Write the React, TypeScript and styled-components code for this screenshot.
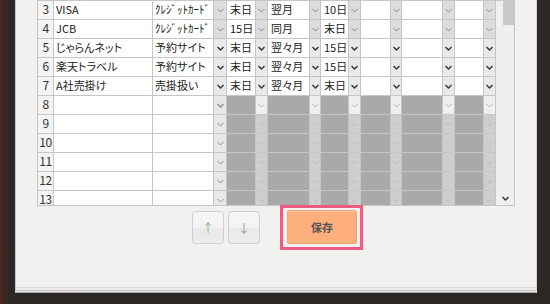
import React from "react";
import styled, { createGlobalStyle } from "styled-components";

const Global = createGlobalStyle`
  html, body { margin: 0; padding: 0; }
  body {
    background: #2b2725;
    font-family: "Noto Sans CJK JP", "Noto Sans", sans-serif;
    color: #222;
  }
`;

const Frame = styled.div`
  box-sizing: border-box;
  width: 550px;
  height: 304px;
  display: flex;
  padding: 0 13px 11px 15px;
  background:
    linear-gradient(to right, #4a2a21 0, #3b2620 4px, #2d2826 9px, #2b2725 100%);
  overflow: hidden;
`;

const Paper = styled.div`
  flex: 1;
  box-sizing: border-box;
  padding-left: 22px;
  box-shadow: inset 1px 0 0 #c9c9c9, inset -1px 0 0 #d8d8d8;
  background: linear-gradient(
    to bottom,
    #f2f1ef 0 287px,
    #dadada 287px 288px,
    #ebebeb 288px 290px,
    #cbcbcb 290px 291px,
    #e4e4e4 291px 292px,
    #a9a9a9 292px
  );
`;

const ScrollBox = styled.div`
  box-sizing: border-box;
  width: 478px;
  height: 206px;
  border: 1px solid #c6c6c6;
  display: flex;
  overflow: hidden;
  background: #fff;
`;

const Body = styled.div`
  width: 457px;
  display: flex;
  flex-direction: column;
  gap: 1px;
  background: #c6c6c6;
`;

const Row = styled.div`
  display: grid;
  grid-template-columns: 15px 98px 60px 12px 28px 11px 41px 10px 27px 11px 29px 10px 40px 11px 28px 11px;
  column-gap: 1px;
  height: 18px;
  flex: none;
`;

const NumCell = styled.div`
  background: #f4f4f4;
  font-size: 12px;
  line-height: 16px;
  text-align: center;
  color: #333;
  letter-spacing: -0.5px;
`;

const TextCell = styled.div<{ $gray?: boolean; $small?: boolean }>`
  background: ${(p) => (p.$gray ? "#a9a9a9" : "#fff")};
  font-size: 11px;
  line-height: 17px;
  padding-left: ${(p) => (p.$small ? "2px" : "3px")};
  white-space: nowrap;
  overflow: hidden;
  font-feature-settings: "palt";
  color: #222;
`;

type ArrowTone = "muted" | "active" | "empty" | "firstOff" | "off";

const arrowBg: Record<ArrowTone, string> = {
  muted: "#dcdcdc",
  active: "#e9e9e9",
  empty: "#e8e8e8",
  firstOff: "#efefef",
  off: "#cecece",
};
const arrowFg: Record<ArrowTone, string> = {
  muted: "#8a8a8a",
  active: "#333",
  empty: "#8f8f8f",
  firstOff: "#b5b5b5",
  off: "#b9b9b9",
};

const ArrowCell = styled.div<{ $tone: ArrowTone }>`
  background: ${(p) => arrowBg[p.$tone]};
  color: ${(p) => arrowFg[p.$tone]};
  display: flex;
  align-items: center;
  justify-content: center;
`;

const Chevron = ({ bold }: { bold?: boolean }) => (
  <svg width="7" height="5" viewBox="0 0 7 5">
    <polyline
      points="0.5,1 3.5,4 6.5,1"
      fill="none"
      stroke="currentColor"
      strokeWidth={bold ? 1.4 : 1}
    />
  </svg>
);

const ScrollBar = styled.div`
  width: 18px;
  border-left: 1px solid #c6c6c6;
  background: #efefef;
  display: flex;
  flex-direction: column;
  justify-content: space-between;
  align-items: flex-end;
`;

const Thumb = styled.div`
  width: 11px;
  height: 24px;
  background: #c9c9c9;
`;

const ScrollDown = styled.div`
  width: 18px;
  height: 9px;
  display: flex;
  justify-content: center;
  align-items: flex-start;
  color: #333;
`;

const Actions = styled.div`
  display: flex;
  align-items: flex-start;
  margin-left: 155px;
  margin-top: -1px;
`;

const MoveButton = styled.button`
  box-sizing: border-box;
  width: 32px;
  height: 33px;
  margin-top: 6px;
  margin-right: 4px;
  padding: 0;
  border: 1px solid #d0d0d0;
  border-radius: 3px;
  background: linear-gradient(to bottom, #f6f6f6 0, #f2f2f2 50%, #e9e9e9 52%, #ececec 100%);
  color: #9a9a9a;
  font-family: "Noto Sans CJK JP", sans-serif;
  font-size: 12px;
  line-height: 1;
`;

const Highlight = styled.div`
  margin-left: 16px;
  border: 3px solid #ef5a82;
  padding: 2px 3px 3px 4px;
`;

const SaveButton = styled.button`
  box-sizing: border-box;
  width: 70px;
  height: 34px;
  padding: 0;
  border: 1px solid #e7a678;
  border-radius: 2px;
  background: #ffb07c;
  color: #555;
  font-family: "Noto Sans CJK JP", sans-serif;
  font-weight: 700;
  font-size: 11px;
  box-shadow: inset 0 1px 0 #ffc59c;
`;

type Data = { n: number; name?: string; type?: string; a?: string; b?: string; c?: string; muted?: boolean };

const rows: Data[] = [
  { n: 3, name: "VISA", type: "ｸﾚｼﾞｯﾄｶｰﾄﾞ", a: "末日", b: "翌月", c: "10日", muted: true },
  { n: 4, name: "JCB", type: "ｸﾚｼﾞｯﾄｶｰﾄﾞ", a: "15日", b: "同月", c: "末日", muted: true },
  { n: 5, name: "じゃらんネット", type: "予約サイト", a: "末日", b: "翌々月", c: "15日" },
  { n: 6, name: "楽天トラベル", type: "予約サイト", a: "末日", b: "翌々月", c: "15日" },
  { n: 7, name: "A社売掛け", type: "売掛扱い", a: "末日", b: "翌々月", c: "末日" },
  { n: 8 },
  { n: 9 },
  { n: 10 },
  { n: 11 },
  { n: 12 },
  { n: 13 },
];

const DataRow = ({ r }: { r: Data }) => {
  const filled = !!r.name;
  const tone: ArrowTone = filled ? (r.muted ? "muted" : "active") : r.n === 8 ? "firstOff" : "off";
  const typeTone: ArrowTone = filled ? tone : "empty";
  const bold = filled && !r.muted;
  const rest = [r.a, r.b, r.c, "", "", ""];
  return (
    <Row>
      <NumCell>{r.n}</NumCell>
      <TextCell $small>{r.name}</TextCell>
      <TextCell $small>{r.type}</TextCell>
      <ArrowCell $tone={typeTone}>
        <Chevron bold={bold || r.n === 8} />
      </ArrowCell>
      {rest.map((v, i) => (
        <React.Fragment key={i}>
          <TextCell $gray={!filled}>{v}</TextCell>
          <ArrowCell $tone={tone}>
            <Chevron bold={bold} />
          </ArrowCell>
        </React.Fragment>
      ))}
    </Row>
  );
};

export default function App() {
  return (
    <>
      <Global />
      <Frame>
        <Paper>
          <ScrollBox>
            <Body>
              {rows.map((r) => (
                <DataRow key={r.n} r={r} />
              ))}
            </Body>
            <ScrollBar>
              <Thumb />
              <ScrollDown>
                <Chevron bold />
              </ScrollDown>
            </ScrollBar>
          </ScrollBox>
          <Actions>
            <MoveButton>↑</MoveButton>
            <MoveButton>↓</MoveButton>
            <Highlight>
              <SaveButton>保存</SaveButton>
            </Highlight>
          </Actions>
        </Paper>
      </Frame>
    </>
  );
}
